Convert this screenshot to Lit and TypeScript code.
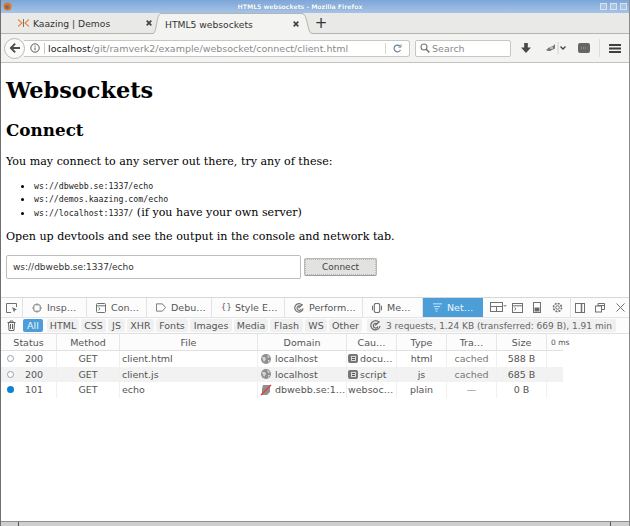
import { LitElement, html, css, svg } from "lit";
import { customElement } from "lit/decorators.js";

const globe = svg`<svg class="ic" width="12" height="12" viewBox="0 0 12 12"><circle cx="6" cy="6" r="5" fill="#8f8f8f"/><path d="M2 4h3l1 2-2 3-1-2zM7 2l3 2-2 1zM8 7l2 0-2 3z" fill="#d6d6d6"/></svg>`;
const broken = svg`<svg class="ic" width="12" height="12" viewBox="0 0 12 12"><path d="M3 1h7v7L7 11H2V5z" fill="#8f8f8f"/><path d="M1 11 11 1" stroke="#e04040" stroke-width="1.5"/></svg>`;
const js = svg`<svg class="ic2" width="10" height="9" viewBox="0 0 10 9"><rect width="10" height="9" rx="2" fill="#777"/><rect x="3" y="2" width="5" height="5" fill="#ddd"/><rect x="4" y="3" width="3" height="1" fill="#555"/><rect x="4" y="5" width="3" height="1" fill="#555"/></svg>`;
const closeX = svg`<svg class="x" width="6" height="6" viewBox="0 0 6 6"><path d="m.7.7 4.600 4.600M5.300.7.7 5.300" stroke="#444" stroke-width="1.700"/></svg>`;

const filters = [
  ["All", 20], ["HTML", 32], ["CSS", 25], ["JS", 17], ["XHR", 27], ["Fonts", 32],
  ["Images", 42], ["Media", 34], ["Flash", 33], ["WS", 22], ["Other", 33],
] as const;

const rows = [
  { dot: "o", st: "200", m: "GET", f: "client.html", icon: globe, d: "localhost", ci: js, c: "docu…", t: "html", tr: "cached", s: "588 B", alt: false },
  { dot: "o", st: "200", m: "GET", f: "client.js", icon: globe, d: "localhost", ci: js, c: "script", t: "js", tr: "cached", s: "685 B", alt: true },
  { dot: "b", st: "101", m: "GET", f: "echo", icon: broken, d: "dbwebb.se:1…", ci: null, c: "websoc…", t: "plain", tr: "—", s: "0 B", alt: false },
];

@customElement("app-root")
export class AppRoot extends LitElement {
  static styles = css`
    :host { display: flex; flex-direction: column; width: 630px; height: 526px; overflow: hidden; background: #fff; font-family: "DejaVu Sans", sans-serif; box-sizing: border-box; border-left: 1px solid #6f6f6f; border-right: 1px solid #8a8a8a; color: #333; }
    svg { display: block; flex: none; }
    .title { height: 13px; flex: none; margin: 0 -1px; background: linear-gradient(#7da6d8, #a6c3e6); display: flex; align-items: center; padding: 0 3px 0 3px; color: #fff; font-size: 6.2px; font-weight: bold; }
    .title .t { flex: 1; text-align: center; padding-right: 12px; text-shadow: 0 0 1px #5c7fa8; }
    .wb { display: flex; gap: 3px; }
    .wb i { width: 7px; height: 7px; border: 1px solid #d7e3f2; box-sizing: border-box; background: #a9c3e2; display: block; }
    .tabs { height: 21px; flex: none; background: #e9e9e7; border-bottom: 1px solid #b4b4b2; display: flex; align-items: flex-end; font-size: 9.2px; box-sizing: border-box; color: #333; }
    .tab { height: 20px; display: flex; align-items: center; box-sizing: border-box; }
    .tab.i { width: 152px; padding: 0 1px 0 17px; }
    .tab.a { width: 141px; padding: 0 3px 0 4px; height: 21px; margin-bottom: -1px; background: #f3f3f1; border-top: 1px solid #b4b4b2; }
    .curve { flex: none; height: 21px; margin-bottom: -1px; }
    .tab .n { flex: 1; white-space: nowrap; }
    .tab .lg { margin-right: 4px; }
    .x { margin-left: 2px; }
    .plus { margin-left: 0; width: 18px; text-align: center; font-size: 15px; line-height: 20px; color: #333; }
    .nav { height: 29px; flex: none; background: #f3f3f1; border-bottom: 1px solid #c2c2c0; display: flex; align-items: center; box-sizing: border-box; padding: 0 0 0 3px; }
    .back { width: 21px; height: 21px; border: 1px solid #b9b9b7; border-radius: 50%; background: #fbfbfa; display: flex; align-items: center; justify-content: center; box-sizing: border-box; flex: none; margin-right: -1px; z-index: 1; }
    .url { width: 386px; height: 17px; border: 1px solid #c6c6c4; border-left: none; border-radius: 0 3px 3px 0; background: #fff; display: flex; align-items: center; font-size: 9.5px; color: #8a8a8a; box-sizing: border-box; padding-left: 6px; }
    .url b { font-weight: normal; color: #222; }
    .url .u { flex: 1; white-space: nowrap; overflow: hidden; margin-left: 4px; padding-left: 3px; border-left: 1px solid #c8c8c8; line-height: 11px; }
    .url .r { width: 23px; height: 11px; border-left: 1px solid #d6d6d6; display: flex; align-items: center; justify-content: center; flex: none; }
    .search { width: 96px; height: 17px; margin-left: 5px; border: 1px solid #c6c6c4; border-radius: 2px; background: #fff; display: flex; align-items: center; gap: 2px; padding-left: 4px; box-sizing: border-box; font-size: 9.5px; color: #8a8a8a; flex: none; }
    .tb { display: flex; align-items: center; flex: none; }
    .tb.dl { margin-left: 10px; }
    .tb.sh { margin-left: 14px; }
    .tb.bx { margin-left: 11px; }
    .tb.mn { margin-left: 9px; border-left: 1px solid #ddd; padding-left: 9px; height: 18px; }
    .page { height: 234px; flex: none; padding: 0 5px; color: #000; font-family: "DejaVu Serif", serif; box-sizing: border-box; display: flex; flex-direction: column; align-items: flex-start; }
    h1 { font-size: 22.4px; line-height: 28px; margin: 13px 0 0; font-weight: bold; }
    h2 { font-size: 16.8px; line-height: 22px; margin: 15px 0 0; font-weight: bold; }
    p { font-size: 11.1px; line-height: 16px; margin: 13px 0 0; white-space: nowrap; }
    p.open { margin-top: 9px; }
    ul { margin: 9px 0 0; padding: 0 0 0 28px; font-size: 11.1px; }
    li { line-height: 13px; height: 13px; white-space: nowrap; }
    li:last-child { height: 15px; line-height: 15px; }
    li code { font-family: "DejaVu Sans Mono", monospace; font-size: 8.25px; color: #222; }
    .form { display: flex; gap: 3px; margin-top: 10px; align-items: center; }
    .inp { width: 295px; height: 24px; border: 1px solid #bdbdbd; border-radius: 2px; box-sizing: border-box; display: flex; align-items: center; padding-left: 6px; font: 9px "DejaVu Sans", sans-serif; color: #333; }
    .btn { width: 73px; height: 18px; background: #e2e2e0; border: 1px solid #b8b8b6; border-bottom-color: #9c9c9c; border-radius: 2px; box-sizing: border-box; display: flex; align-items: center; justify-content: center; font: 9px "DejaVu Sans", sans-serif; color: #444; outline: 1px dotted #bbb; outline-offset: -2px; }
    .dt { flex: 1; display: flex; flex-direction: column; border-top: 1px solid #d8d8d8; font-size: 9.5px; color: #555; min-height: 0; }
    .dtb { height: 19px; flex: none; display: flex; align-items: stretch; background: #fcfcfc; border-bottom: 1px solid #e3e3e3; }
    .dtab { display: flex; align-items: center; gap: 5px; box-sizing: border-box; padding-left: 9px; border-right: 1px solid #e3e3e3; white-space: nowrap; flex: none; }
    .dtab.on { background: #4c9ed9; color: #eef6fc; border: none; }
    .w64 { width: 64px; } .w60 { width: 60px; } .w65 { width: 65px; } .w73 { width: 73px; gap: 4px; } .w78 { width: 78px; }
    .braces { width: 10px; flex: none; font-size: 8px; letter-spacing: .5px; }
    .dico { width: 20px; display: flex; align-items: center; justify-content: center; flex: none; box-sizing: border-box; }
    .dico.w22 { width: 22px; border-right: 1px solid #e3e3e3; }
    .dico.d-l { width: 24px; justify-content: flex-end; }
    .dico.d-s { width: 18px; border-left: 1px solid #e3e3e3; margin-left: 3px; }
    .dico.d-w { width: 24px; }
    .dico.d-c { width: 17px; }
    .filt { height: 16px; flex: none; display: flex; align-items: center; padding-left: 0; gap: 2px; background: #fcfcfc; border-bottom: 1px solid #e0e0e0; box-sizing: border-box; }
    .fb { height: 13px; display: flex; align-items: center; justify-content: center; background: #f0f0f0; border-radius: 2px; color: #555; box-sizing: border-box; flex: none; }
    .fb.on { background: #4c9ed9; color: #eaf4fb; margin-right: 2px; }
    .sum { display: flex; align-items: center; gap: 5px; height: 13px; width: 249px; flex: none; background: #f0f0f0; border-radius: 2px; padding: 0 0 0 3px; margin-left: 3px; white-space: nowrap; color: #666; font-size: 9px; box-sizing: border-box; }
    .grid { display: grid; grid-template-columns: 56px 63px 138px 89px 50px 50px 50px 50px 16px; }
    .hd { height: 17px; align-items: center; display: flex; justify-content: center; border-right: 1px solid #e6e6e6; border-bottom: 1px solid #e0e0e0; box-sizing: border-box; background: #fcfcfc; color: #555; white-space: nowrap; }
    .hd.l { border-right: none; justify-content: flex-start; font-size: 7.5px; padding-left: 4px; overflow: visible; }
    .c { height: 15.5px; display: flex; align-items: center; white-space: nowrap; overflow: hidden; box-sizing: border-box; color: #555; border-right: 1px solid #f0f0f0; }
    .ctr { justify-content: center; }
    .alt { background: #f2f2f2; }
    .ic { margin: 0 3px 0 2px; }
    .ic2 { margin: 0 2px 0 1px; }
    .st { padding-left: 6px; gap: 11px; }
    .dot { width: 7px; height: 7px; border-radius: 50%; box-sizing: border-box; flex: none; }
    .dot.o { border: 1.5px solid #8ea3b4; background: #fff; }
    .dot.b { background: #0a84d0; }
    .fl { padding-left: 2px; }
    .ws { padding-left: 1px; }
    .end { border: none; }
    .sp { flex: 1; }
    .scroll { height: 4px; flex: none; margin: 0 -1px; background: #cfcfcd; border-top: 1px solid #8f8f8f; display: flex; justify-content: space-between; padding: 0 19px 0 18px; }
    .scroll i { width: 1px; background: #555; display: block; }
    .t2 { color: #777; }
  `;

  render() {
    const s = "#707070";
    return html`
      <div class="title">
        <svg width="9" height="9" viewBox="0 0 9 9"><circle cx="4.500" cy="4.500" r="4" fill="#d9772b"/><circle cx="4" cy="5" r="2" fill="#7b6a6a"/></svg>
        <span class="t">HTML5 websockets - Mozilla Firefox</span>
        <span class="wb"><i></i><i></i><i></i></span>
      </div>
      <div class="tabs">
        <div class="tab i">
          <svg class="lg" width="11" height="8" viewBox="0 0 11 8" fill="none" stroke-width="1.100"><path d="M0 .5 4 4 0 7.500" stroke="#e8843a"/><path d="M11 .5 7 4l4 3.500" stroke="#e8843a"/><path d="M5.500 0v8" stroke="#555" stroke-width=".8"/></svg>
          <span class="n">Kaazing | Demos</span>${closeX}
        </div>
        <svg class="curve" width="8" height="21" viewBox="0 0 8 21"><path d="M0 20.500C4 20.500 3 .5 8 .5V21H0z" fill="#f3f3f1"/><path d="M0 20.500C4 20.500 3 .5 8 .5" fill="none" stroke="#b4b4b2"/></svg>
        <div class="tab a"><span class="n">HTML5 websockets</span>${closeX}</div>
        <svg class="curve" width="10" height="21" viewBox="0 0 10 21"><path d="M10 20.500C5 20.500 6 .5 0 .5V21H10z" fill="#f3f3f1"/><path d="M10 20.500C5 20.500 6 .5 0 .5" fill="none" stroke="#b4b4b2"/></svg>
        <span class="plus">+</span>
      </div>
      <div class="nav">
        <div class="back"><svg width="11" height="10" viewBox="0 0 11 10"><path d="M5.500 0 6.800 1.200 4.200 4H11v2H4.200l2.600 2.800L5.500 10 .5 5z" fill="#4d4d4d"/></svg></div>
        <div class="url">
          <svg width="10" height="10" viewBox="0 0 11 11" fill="none" stroke="#444"><circle cx="5.500" cy="5.500" r="4.600"/><path d="M5.500 5v3M5.500 3v1.200"/></svg>
          <span class="u"><b>localhost</b>/git/ramverk2/example/websocket/connect/client.html</span>
          <span class="r"><svg width="9" height="9" viewBox="0 0 9 9" fill="none" stroke="#6f8296" stroke-width="1.200"><path d="M7.500 6A3.400 3.400 0 1 1 7 2.200"/><path d="M8 .5v2.600H5.400" stroke-width="1"/></svg></span>
        </div>
        <div class="search">
          <svg width="10" height="10" viewBox="0 0 10 10" fill="none" stroke="#777" stroke-width="1.100"><circle cx="4" cy="4" r="3"/><path d="m6.200 6.200 3.200 3.200" stroke-width="1.500"/></svg>
          Search
        </div>
        <div class="tb dl"><svg width="10" height="10" viewBox="0 0 11 11"><path d="M3.500 0h4v5H11l-5.500 6L0 5h3.500z" fill="#4a4a4a"/></svg></div>
        <div class="tb sh"><svg width="22" height="12" viewBox="0 0 22 12" fill="none"><path d="M1 8 4 5.500l4-1.500 2-2v4.500L7 8 5 9H3z" fill="#777"/><path d="M5 5h3v2H5z" fill="#bbb"/><path d="M13 0v12" stroke="#d0d0d0"/><path d="m15.500 4.500 2.500 2.500 2.500-2.500" stroke="#444" stroke-width="1.300"/></svg></div>
        <div class="tb bx"><svg width="12" height="10" viewBox="0 0 12 10"><rect width="12" height="10" rx="2" fill="#666"/><path d="M3 5h6" stroke="#aaa" stroke-dasharray="1 1"/></svg></div>
        <div class="tb mn"><svg width="12" height="9" viewBox="0 0 12 9"><path d="M0 1h12M0 4.500h12M0 8h12" stroke="#3f3f3f" stroke-width="1.800"/></svg></div>
      </div>
      <div class="page">
        <h1>Websockets</h1>
        <h2>Connect</h2>
        <p>You may connect to any server out there, try any of these:</p>
        <ul>
          <li><code>ws://dbwebb.se:1337/echo</code></li>
          <li><code>ws://demos.kaazing.com/echo</code></li>
          <li><code>ws://localhost:1337/</code> (if you have your own server)</li>
        </ul>
        <p class="open">Open up devtools and see the output in the console and network tab.</p>
        <div class="form"><div class="inp">ws://dbwebb.se:1337/echo</div><div class="btn">Connect</div></div>
      </div>
      <div class="dt">
        <div class="dtb">
          <div class="dico w22"><svg width="12" height="11" viewBox="0 0 12 11" fill="none" stroke="${s}"><path d="M5 10.500H.5v-9h10V5"/><path d="m6 5 5 2.500-2 .7L8 10.500z" fill="${s}" stroke="none"/></svg></div>
          <div class="dtab w64"><svg width="10" height="10" viewBox="0 0 11 11" fill="none" stroke="${s}"><rect x="2" y="2" width="7" height="7" rx="1"/><path d="M5.500 0v2M5.500 9v2M0 5.500h2M9 5.500h2" stroke-width=".8"/></svg>Insp…</div>
          <div class="dtab w60"><svg width="10" height="10" viewBox="0 0 10 10" fill="none" stroke="${s}"><rect x=".5" y=".5" width="9" height="9" rx="1"/><path d="M.5 2.800h9M2.500 4.500l1.500 1.300-1.500 1.300"/></svg>Con…</div>
          <div class="dtab w65"><svg width="10" height="9" viewBox="0 0 11 9" fill="none" stroke="${s}"><path d="M.5.500h6.500l3.500 4-3.500 4H.5z"/></svg>Debu…</div>
          <div class="dtab w73"><span class="braces">{}</span>Style E…</div>
          <div class="dtab w78"><svg width="10" height="10" viewBox="0 0 11 11" fill="none" stroke="${s}" stroke-width="1.300"><path d="M9 2.400A4.600 4.600 0 1 0 10 6"/><path d="M7.500 4A2.400 2.400 0 1 0 8 6.500"/><path d="M5 5.500 9.500 1.500"/></svg>Perform…</div>
          <div class="dtab w60"><svg width="10" height="10" viewBox="0 0 11 11" fill="none" stroke="${s}"><rect x="2.500" y=".5" width="6" height="10" rx="2" stroke-width="1.300"/><path d="M.5 3v5M10.500 3v5" stroke-width="1.200"/></svg>Me…</div>
          <div class="dtab on w60"><svg width="10" height="9" viewBox="0 0 11 9" fill="none" stroke="#d8ecfa"><path d="M1 .5h10M2 3.500h7M3 6h4M4 8.500h2"/></svg>Net…</div>
          <div class="dico d-l"><svg width="17" height="11" viewBox="0 0 17 11" fill="none" stroke="${s}"><rect x=".5" y=".5" width="12" height="9"/><path d="M.5 4.500h12M6.500 4.500v5"/><path d="m13 3 4 0-2 2z" fill="#999" stroke="none"/></svg></div>
          <div class="dico"><svg width="11" height="10" viewBox="0 0 11 10" fill="none" stroke="${s}"><rect x=".5" y=".5" width="10" height="9"/><path d="M.5 2.800h10M2.500 4.500 4 5.800 2.500 7"/></svg></div>
          <div class="dico"><svg width="8" height="11" viewBox="0 0 8 11" fill="none" stroke="${s}"><rect x=".5" y=".5" width="7" height="10"/><rect x="2" y="6" width="4" height="3" fill="#666"/></svg></div>
          <div class="dico"><svg width="11" height="11" viewBox="0 0 11 11" fill="none" stroke="${s}"><circle cx="5.500" cy="5.500" r="1.800"/><circle cx="5.500" cy="5.500" r="4" stroke-width="1.600" stroke-dasharray="2 1.100"/></svg></div>
          <div class="dico d-s"><svg width="10" height="10" viewBox="0 0 10 10" fill="none" stroke="${s}"><rect x=".5" y=".5" width="9" height="9"/><path d="M6.500 .5v9" stroke-width="1.500"/></svg></div>
          <div class="dico d-w"><svg width="10" height="10" viewBox="0 0 10 10" fill="none" stroke="${s}"><rect x=".5" y="3" width="6" height="6"/><path d="M3 3V.5h6.500v6H7M3 2.500h6"/></svg></div>
          <div class="dico d-c"><svg width="9" height="9" viewBox="0 0 9 9" stroke="${s}"><path d="m.5.500 8 8M8.500.500l-8 8"/></svg></div>
        </div>
        <div class="filt">
          <div class="dico"><svg width="9" height="11" viewBox="0 0 9 11" fill="none" stroke="#666"><path d="M.5 2.500h8M3 2.500V1h3v1.500M1.500 2.500l.5 8h5l.5-8M3.500 4v5M5.500 4v5"/></svg></div>
          ${filters.map(([n, w], i) => html`<span class="fb ${i === 0 ? "on" : ""}" style="width:${w}px">${n}</span>`)}
          <span class="sum"><svg width="11" height="11" viewBox="0 0 11 11" fill="none" stroke="#666" stroke-width="1.200"><path d="M9 2.400A4.600 4.600 0 1 0 10 6"/><path d="M7.500 4A2.400 2.400 0 1 0 8 6.500"/><path d="M5 5.500 9.500 1.500"/></svg>3 requests, 1.24 KB (transferred: 669 B), 1.91 min</span>
        </div>
        <div class="grid">
          <div class="hd">Status</div><div class="hd">Method</div><div class="hd">File</div><div class="hd">Domain</div><div class="hd">Cau…</div><div class="hd">Type</div><div class="hd">Tra…</div><div class="hd">Size</div><div class="hd l">0 ms</div>
          ${rows.map((r) => {
            const a = r.alt ? "alt" : "";
            return html`
            <div class="c st ${a}"><span class="dot ${r.dot}"></span>${r.st}</div>
            <div class="c ctr ${a}">${r.m}</div>
            <div class="c fl ${a}">${r.f}</div>
            <div class="c ${a}">${r.icon}${r.d}</div>
            <div class="c ${r.ci ? "" : "ws"} ${a}">${r.ci}${r.c}</div>
            <div class="c ctr ${a}">${r.t}</div>
            <div class="c ctr t2 ${a}">${r.tr}</div>
            <div class="c ctr ${a}">${r.s}</div>
            <div class="c end ${a}"></div>`;
          })}
        </div>
        <div class="sp"></div>
      </div>
      <div class="scroll"><i></i><i></i></div>
    `;
  }
}
